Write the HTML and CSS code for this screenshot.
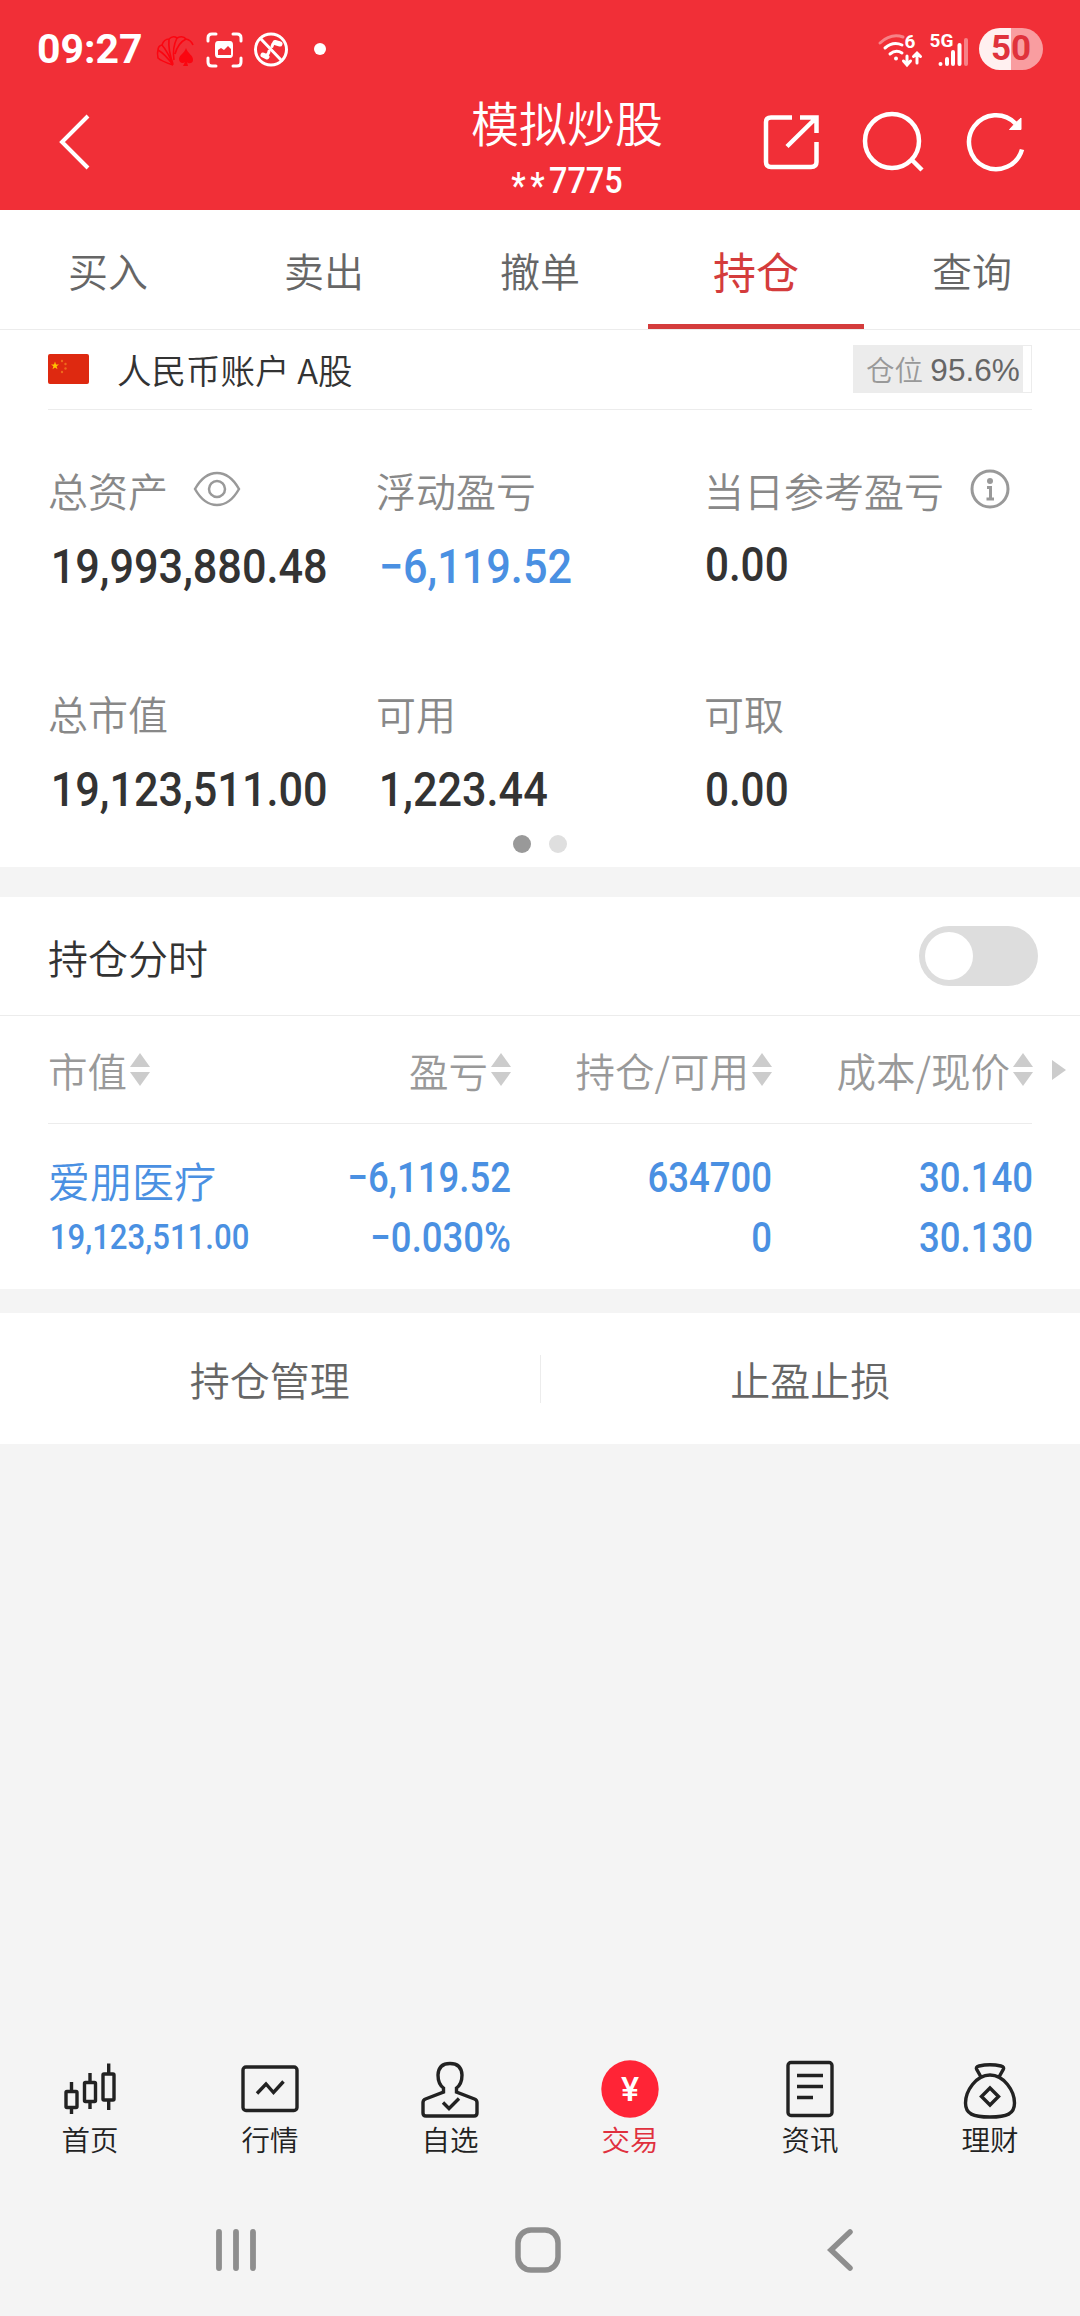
FILE: index.html
```html
<!DOCTYPE html>
<html lang="zh-CN">
<head>
    <meta charset="UTF-8">
    <meta name="viewport" content="width=device-width, initial-scale=1.0">
    <title>模拟炒股</title>
    <link rel="stylesheet" href="styles.css">
</head>
<body>

<header class="header">
    <div class="status-bar">
        <span class="time">09:27</span>
        <!-- notification icons -->
        <svg class="notify-icons" width="170" height="42" viewBox="0 0 170 42">
            <g fill="none" stroke="#fb0510" stroke-width="1.6">
                <path d="M17 37Q5 33 2 30Q1 25 2 22Q2 18 6 17Q8 11 13 11Q17 7 21 10Q27 7 30 11Q35 12 37 17"/>
                <path d="M2 22Q9 26 17 37M6 17Q12 24 17 37M13 11Q12 22 17 36M21 10Q16 20 18 32M30 11Q22 15 19 26"/>
            </g>
            <path d="M30 20C32 26 37 27 37 32C37 36 32 36 31 34L32 38H27L29 34C27 36 23 35 23 31C23 27 28 26 30 20Z" fill="#fb0510"/>
            <g fill="none" stroke="#fff" stroke-width="3" stroke-linecap="round">
                <path d="M52 13V10Q52 6 56 6H60M77 6H81Q85 6 85 10V13M85 30V34Q85 38 81 38H77M60 38H56Q52 38 52 34V30"/>
                <circle cx="115" cy="21.500" r="15.500"/>
                <path d="M104.500 10.500L125.500 32.500"/>
            </g>
            <path d="M62 13H74Q77 13 77 17V26Q77 30 74 30H62Q59 30 59 26V17Q59 13 62 13Z" fill="#fff"/>
            <path d="M62 27V22L65 20L68 22L72 18L75 21V27Z" fill="#f12f37"/>
            <g fill="none" stroke="#fff" stroke-linecap="round">
                <path d="M123 15Q117 13 116 18.500M113 23Q113 27 108 28" stroke-width="3"/>
                <path d="M119 14.500L124 16M107 27L111 29" stroke-width="5"/>
            </g>
            <circle cx="164" cy="21" r="6" fill="#fff"/>
        </svg>
        <svg class="signal-icons" width="96" height="42" viewBox="0 0 96 42">
            <g fill="none" stroke="#fff" stroke-width="3" stroke-linecap="round">
                <path d="M3 15Q14 5 26 9" opacity=".4"/>
                <path d="M8 20Q16 13 25 17M13 26Q19 21 25 25"/>
                <path d="M30 28V36M26.500 33L30 37L33.500 33M40 35V26M36.500 28.500L40 25L43.500 28.500"/>
            </g>
            <circle cx="19" cy="30.500" r="2" fill="#fff"/>
            <text class="signal-text" x="27.500" y="20">6</text>
            <text class="signal-text" x="52.500" y="18.500">5G</text>
            <g stroke="#fff" stroke-width="4" stroke-linecap="round">
                <path d="M63.500 36V36M70 36V31M76 36V24M82.500 36V17"/>
                <path d="M89 36V12" opacity=".4"/>
            </g>
        </svg>
        <span class="battery">50</span>
    </div>
    <div class="title-bar">
        <svg class="back" width="40" height="60" viewBox="0 0 40 60" fill="none" stroke="#fff" stroke-width="4">
            <path d="M34 4L8 30L34 56"/>
        </svg>
        <div class="title">
            <h1>模拟炒股</h1>
            <p class="num"><span class="mask">**</span>7775</p>
        </div>
        <svg width="60" height="60" viewBox="0 0 60 60" fill="none" stroke="#fff" stroke-width="4.500">
            <path d="M31 5.500H10Q5 5.500 5 10V50Q5 55 10 55H50Q55.500 55 55.500 50V30M39 5.500H55.500V21M55 6L26 34.500"/>
        </svg>
        <svg width="64" height="64" viewBox="0 0 64 64" fill="none" stroke="#fff" stroke-width="4.500">
            <circle cx="31" cy="31" r="27"/>
            <path d="M50 49L61 60"/>
        </svg>
        <svg width="62" height="62" viewBox="0 0 62 62" fill="none" stroke="#fff" stroke-width="4.500">
            <path d="M57 38.500A27 27 0 1 1 50.500 12.500"/>
            <path d="M56 7V18.500H44.500L50 12.500Z" fill="#fff" stroke-width="1"/>
        </svg>
    </div>
</header>

<nav class="tabs">
    <a>买入</a>
    <a>卖出</a>
    <a>撤单</a>
    <a class="active">持仓</a>
    <a>查询</a>
</nav>

<section class="account">
    <div class="account-row">
        <svg width="41" height="30" viewBox="0 0 41 30">
            <rect width="41" height="30" rx="2" fill="#de2910"/>
            <path d="M7 7.500L8 10.500H11L8.600 12.300L9.500 15.200L7 13.500L4.500 15.200L5.400 12.300L3 10.500H6Z" fill="#ffc400"/>
            <g fill="#ee6a1c"><circle cx="14" cy="7" r="1.200"/><circle cx="17.500" cy="10" r="1.200"/><circle cx="17.500" cy="14.500" r="1.200"/><circle cx="14" cy="18" r="1.200"/></g>
        </svg>
        <span class="account-name">人民币账户 A股</span>
        <div class="position"><div class="position-fill" style="width: 95.6%">仓位 <b>95.6%</b></div></div>
    </div>
    <div class="stats">
        <div class="stat">
            <div class="label">总资产
                <svg class="eye" width="48" height="36" viewBox="0 0 48 36" fill="none" stroke="#999" stroke-width="2.500">
                    <path d="M2 18Q11 2 24 2T46 18Q37 34 24 34T2 18Z"/>
                    <circle cx="24" cy="18" r="8"/>
                </svg>
            </div>
            <div class="value num">19,993,880.48</div>
        </div>
        <div class="stat">
            <div class="label">浮动盈亏</div>
            <div class="value num blue">−6,119.52</div>
        </div>
        <div class="stat">
            <div class="label">当日参考盈亏
                <svg class="info" width="40" height="40" viewBox="0 0 40 40" fill="none" stroke="#999" stroke-width="3">
                    <circle cx="20" cy="20" r="18"/>
                    <circle cx="20" cy="12" r="3" fill="#999" stroke="none"/>
                    <path d="M17 18.500H20.500V29.500M16.500 30H24"/>
                </svg>
            </div>
            <div class="value num raised">0.00</div>
        </div>
        <div class="stat">
            <div class="label">总市值</div>
            <div class="value num">19,123,511.00</div>
        </div>
        <div class="stat">
            <div class="label">可用</div>
            <div class="value num">1,223.44</div>
        </div>
        <div class="stat">
            <div class="label">可取</div>
            <div class="value num">0.00</div>
        </div>
    </div>
    <div class="dots"><i class="on"></i><i></i></div>
</section>

<section class="holdings">
    <div class="chart-row">
        <span>持仓分时</span>
        <div class="toggle"></div>
    </div>
    <div class="table-row table-head">
        <div class="cell">市值<i class="sort"></i></div>
        <div class="cell">盈亏<i class="sort"></i></div>
        <div class="cell">持仓/可用<i class="sort"></i></div>
        <div class="cell">成本/现价<i class="sort"></i></div>
        <i class="more"></i>
    </div>
    <div class="table-row table-body">
        <div class="cell">
            <div class="stock">爱朋医疗</div>
            <div class="num small">19,123,511.00</div>
        </div>
        <div class="cell num">
            <div>−6,119.52</div>
            <div>−0.030%</div>
        </div>
        <div class="cell num">
            <div>634700</div>
            <div>0</div>
        </div>
        <div class="cell num">
            <div>30.140</div>
            <div>30.130</div>
        </div>
    </div>
</section>

<section class="actions">
    <a>持仓管理</a>
    <a>止盈止损</a>
</section>

<nav class="bottom-nav">
    <a>
        <svg width="60" height="60" viewBox="0 0 60 60" fill="none" stroke="#222" stroke-width="3.400">
            <rect x="6" y="32.500" width="11" height="16" rx="1"/>
            <rect x="24.500" y="23.500" width="11" height="19" rx="1"/>
            <rect x="43" y="15" width="11" height="26" rx="1"/>
            <path d="M11.500 23V32M11.500 49V55M30 14V23M30 43V50M48.700 4.500V14M48.700 41V51"/>
        </svg>
        首页
    </a>
    <a>
        <svg width="60" height="60" viewBox="0 0 60 60" fill="none" stroke="#222" stroke-width="3.400">
            <rect x="3" y="8" width="54" height="43.500" rx="3"/>
            <path d="M17 34.500L26 25L33.500 33.500L43.500 22.500"/>
        </svg>
        行情
    </a>
    <a>
        <svg width="60" height="60" viewBox="0 0 60 60" fill="none" stroke="#222" stroke-width="3.400">
            <path d="M23.500 29V33L5.500 40Q3 41 3 43.500V54Q3 57 6 57H54Q57 57 57 54V43.500Q57 41 54.500 40L36.500 33V29Q42 25 42 16Q41.500 4.500 30 4.500Q18.500 4.500 18 16Q18 25 23.500 29Z"/>
            <path d="M23 43.500L29 49.500L39 39.500"/>
        </svg>
        自选
    </a>
    <a class="active">
        <svg width="60" height="60" viewBox="0 0 60 60">
            <circle cx="30" cy="30" r="28.700" fill="#ff2436"/>
            <text class="yuan" x="30" y="42">¥</text>
        </svg>
        交易
    </a>
    <a>
        <svg width="60" height="60" viewBox="0 0 60 60" fill="none" stroke="#222" stroke-width="3.400">
            <rect x="8" y="3.500" width="44" height="53" rx="3"/>
            <path d="M17 16.500H43M17 27.500H43M17 38.500H33"/>
        </svg>
        资讯
    </a>
    <a>
        <svg width="60" height="60" viewBox="0 0 60 60" fill="none" stroke="#222" stroke-width="3.400">
            <path d="M21 18L17 11Q15 8 19 7Q30 4.500 41 7Q45 8 43 11L39 18"/>
            <path d="M30 16C44 16 54.500 32 54.500 44C54.500 55 47 58 30 58C13 58 5.500 55 5.500 44C5.500 32 16 16 30 16Z"/>
            <path d="M30 29L38.500 37.500L30 46L21.500 37.500Z"/>
        </svg>
        理财
    </a>
</nav>

<div class="system-nav">
    <svg width="44" height="48" viewBox="0 0 44 48" stroke="#8e8e8e" stroke-width="5.800" stroke-linecap="round">
        <path d="M5 6V42M22 6V42M39 6V42"/>
    </svg>
    <svg width="48" height="48" viewBox="0 0 48 48" fill="none" stroke="#8e8e8e" stroke-width="5.500">
        <rect x="4" y="4" width="40" height="40" rx="13"/>
    </svg>
    <svg class="nav-back" width="30" height="48" viewBox="0 0 30 48" fill="none" stroke="#8e8e8e" stroke-width="5.500" stroke-linecap="round">
        <path d="M25 6L6 24L25 42"/>
    </svg>
</div>

</body>
</html>
```
FILE: styles.css
```css
* {
    box-sizing: border-box;
}
body {
    display: flex;
    flex-direction: column;
    width: 1080px;
    height: 2316px;
    margin: 0;
    font-family: "Noto Sans CJK SC", sans-serif;
    font-size: 40px;
    font-weight: 350;
    line-height: 60px;
    color: #333;
    background-color: #f4f4f4;
}
svg {
    display: block;
    flex: none;
}
/* narrow digits */
.num {
    font-family: Roboto, "Noto Sans CJK SC", sans-serif;
    font-weight: 500;
    transform: scaleX(0.9);
    transform-origin: left;
}

/* header */
.header {
    height: 210px;
    color: #fff;
    background-color: #f12f37;
}
.status-bar {
    display: flex;
    align-items: center;
    height: 98px;
    padding: 0 37px;
}
.time {
    width: 119px;
    font-family: Roboto, sans-serif;
    font-size: 41px;
    font-weight: 700;
}
.notify-icons {
    margin-right: auto;
}
.signal-icons {
    margin-right: 6px;
}
.signal-text {
    font-family: Roboto, sans-serif;
    font-size: 19px;
    font-weight: 700;
    fill: #fff;
}
.battery {
    width: 64px;
    height: 42px;
    border-radius: 21px;
    font-family: Roboto, sans-serif;
    font-size: 35px;
    font-weight: 700;
    line-height: 42px;
    text-align: center;
    color: #e0323c;
    background: linear-gradient(90deg, #fff0f0 50%, #f99da0 50%);
}
.title-bar {
    display: flex;
    align-items: center;
    height: 88px;
    padding: 0 53px 0 54px;
    gap: 40px;
}
.title {
    flex: 1;
    padding: 19px 0 0 279px;
    text-align: center;
}
.title h1 {
    margin: 0;
    font-size: 48px;
    font-weight: 350;
    line-height: 58px;
}
.title p {
    margin: 0;
    font-size: 36px;
    line-height: 62px;
    transform-origin: center;
}
.mask {
    letter-spacing: 5px;
    line-height: 0;
    vertical-align: -5px;
}

/* tabs */
.tabs {
    display: flex;
    height: 120px;
    border-bottom: 1px solid #ececec;
    background-color: #fff;
}
.tabs a {
    flex: 1;
    padding-top: 30px;
    text-align: center;
    color: #666;
}
.tabs .active {
    font-size: 43px;
    font-weight: 400;
    color: #d43c3c;
    border-bottom: 5px solid #d43c3c;
}

/* account */
.account {
    height: 537px;
    padding: 0 48px;
    background-color: #fff;
}
.account-row {
    display: flex;
    align-items: center;
    height: 80px;
    padding-bottom: 1px;
    border-bottom: 1px solid #ececec;
}
.account-name {
    margin: 0 auto 0 28px;
    font-size: 34.5px;
}
.position {
    width: 179px;
    height: 48px;
    border: 1px solid #ececec;
}
.position-fill {
    height: 46px;
    padding-left: 12px;
    font-size: 28.5px;
    line-height: 46px;
    white-space: nowrap;
    color: #999;
    background-color: #ececec;
}
.position-fill b {
    margin-left: 1px;
    font-family: "Liberation Sans", sans-serif;
    font-size: 31.5px;
    font-weight: 400;
    color: #666;
}
.stats {
    display: grid;
    grid-template-columns: repeat(3, 1fr);
    grid-auto-rows: 223px;
    height: 425px;
    padding-top: 50px;
}
.label {
    display: flex;
    align-items: center;
    height: 60px;
    color: #888;
}
.eye {
    margin: 0 0 3px 25px;
}
.info {
    margin: 0 0 3px 26px;
}
.value {
    padding-left: 3px;
    margin-top: 17px;
    font-size: 48px;
    white-space: nowrap;
}
.value.raised {
    margin-top: 15px;
}
.stat:nth-child(3n) .value {
    padding-left: 1px;
    transform: scaleX(0.88);
}
.blue {
    color: #4a90e2;
}
.dots {
    display: flex;
    justify-content: center;
    gap: 18px;
}
.dots i {
    width: 18px;
    height: 18px;
    border-radius: 50%;
    background-color: #dfdfdf;
}
.dots .on {
    background-color: #999;
}

/* holdings */
.holdings {
    height: 392px;
    margin-top: 30px;
    background-color: #fff;
}
.chart-row {
    display: flex;
    align-items: center;
    justify-content: space-between;
    height: 119px;
    padding: 0 42px 0 48px;
    border-bottom: 1px solid #ececec;
}
.chart-row span {
    padding-top: 2px;
}
.toggle {
    width: 119px;
    height: 60px;
    padding: 6px;
    border-radius: 30px;
    background-color: #ddd;
}
.toggle::before {
    content: "";
    display: block;
    width: 48px;
    height: 48px;
    border-radius: 50%;
    background-color: #fff;
}
.table-row {
    display: grid;
    grid-template-columns: 202px 261px 261px 261px;
    margin: 0 48px;
}
.table-head {
    position: relative;
    align-items: center;
    height: 108px;
    border-bottom: 1px solid #ececec;
    font-size: 39.5px;
    color: #999;
}
.table-head .cell {
    display: flex;
    align-items: center;
    justify-content: flex-end;
}
.table-head .cell:first-child {
    justify-content: flex-start;
}
.sort {
    display: flex;
    flex-direction: column;
    gap: 5px;
    margin-left: 3px;
}
.sort::before,
.sort::after {
    content: "";
    border: 10px solid transparent;
    border-top-width: 0;
    border-bottom: 14px solid #ccc;
}
.sort::after {
    border-top: 14px solid #ccc;
    border-bottom: 0;
}
.more {
    position: absolute;
    right: -34px;
    top: 44px;
    border: 10px solid transparent;
    border-left: 14px solid #ccc;
    border-right: 0;
}
.table-body {
    padding-top: 24px;
    color: #4a90e2;
}
.table-body .cell {
    font-size: 42px;
    text-align: right;
    white-space: nowrap;
}
.table-body .cell.num {
    transform: scaleX(0.87);
    transform-origin: right;
}
.table-body .cell:first-child {
    text-align: left;
}
.table-body .small {
    padding-left: 2px;
    font-size: 35px;
    transform: scaleX(0.89);
}
.stock {
    padding-top: 4px;
    line-height: 56px;
}

/* actions */
.actions {
    display: flex;
    align-items: center;
    height: 131px;
    margin-top: 24px;
    background-color: #fff;
}
.actions a {
    flex: 1;
    height: 48px;
    line-height: 48px;
    text-align: center;
    color: #666;
}
.actions a + a {
    border-left: 1px solid #ececec;
}

/* bottom navigation */
.bottom-nav {
    display: flex;
    margin-top: auto;
    height: 122px;
}
.bottom-nav a {
    display: flex;
    flex: 1;
    flex-direction: column;
    align-items: center;
    font-size: 28.5px;
    line-height: 40px;
    color: #222;
}
.bottom-nav .active {
    color: #e0303e;
}
.yuan {
    font-family: Roboto, sans-serif;
    font-size: 34px;
    font-weight: 500;
    text-anchor: middle;
    fill: #fff;
}
.system-nav {
    display: flex;
    align-items: center;
    gap: 256px;
    height: 135px;
    padding: 5px 0 3px 214px;
}
.nav-back {
    margin-left: 7px;
}
```
